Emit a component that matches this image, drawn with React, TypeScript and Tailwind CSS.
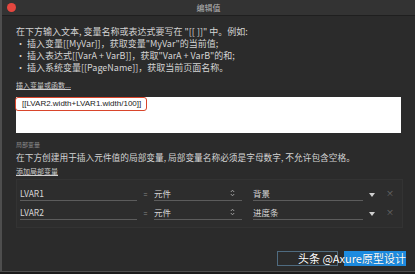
import React from 'react';

const font = { fontFamily: '"Noto Sans CJK SC", "Noto Sans", sans-serif' };

function Row({ name, target }: { name: string; target: string }) {
  return (
    <div className="flex items-end h-[19px]">
      <div className="ml-[3px] w-[117px] border-b border-[#5c5c5c] text-[8.5px] leading-[12px] text-[#d6d6d6] pb-[1px]">{name}</div>
      <div className="w-[17px] text-center text-[7px] leading-[12px] text-[#8a8a8a] pb-[1px]">=</div>
      <div className="w-[88px] border-b border-[#5c5c5c] flex items-center justify-between text-[8.5px] leading-[12px] text-[#d6d6d6] pb-[1px]">
        <span>元件</span>
        <svg width="5" height="8" viewBox="0 0 5 8" className="mr-[7px]">
          <path d="M0.8 3 L2.5 1.2 L4.2 3 M0.8 5 L2.5 6.8 L4.2 5" fill="none" stroke="#a8a8a8" strokeWidth="0.9" />
        </svg>
      </div>
      <div className="ml-[11px] w-[110px] border-b border-[#5c5c5c] text-[8.5px] leading-[12px] text-[#d6d6d6] pb-[1px]">{target}</div>
      <div className="w-[17px] flex justify-center pb-[4px]">
        <svg width="6" height="4" viewBox="0 0 6 4"><path d="M0 0 L6 0 L3 4 Z" fill="#cfcfcf" /></svg>
      </div>
      <div className="ml-[6px] text-[8px] leading-[12px] text-[#707070] pb-[2px]">×</div>
    </div>
  );
}

export default function App() {
  return (
    <div className="w-[415px] h-[274px] bg-[#1b1b1b] overflow-hidden relative" style={font}>
      <div className="w-[415px] h-[272px] bg-[#2b2b2b] border-l-2 border-b border-[#4e4e4e] flex flex-col">
        <div className="h-[16px] bg-[#333333] border-b border-[#1f1f1f] flex items-center relative">
          <div className="ml-[5px] w-[9px] h-[9px] rounded-full bg-[#e5473f]" />
          <div className="absolute inset-0 flex items-center justify-center text-[8px] text-[#b5b5b5]">编辑值</div>
        </div>

        <div className="px-[14px] pt-[10px] flex flex-col">
          <div className="text-[9px] leading-[12px] text-[#d4d4d4]">
            <div>在下方输入文本, 变量名称或表达式要写在 "[[ ]]" 中。例如:</div>
            <div>• 插入变量[[MyVar]]，获取变量"MyVar"的当前值;</div>
            <div>• 插入表达式[[VarA + VarB]]，获取"VarA + VarB"的和;</div>
            <div>• 插入系统变量[[PageName]]，获取当前页面名称。</div>
          </div>

          <div className="mt-[6px] text-[7px] leading-[10px] text-[#cfcfcf] underline">插入变量或函数...</div>

          <div className="mt-[7px] h-[36px] bg-white relative">
            <div className="absolute left-[-1px] top-0 w-[132px] h-[14px] border-[1.5px] border-[#d9452b] rounded-[3px]" />
            <div className="pl-[6px] pt-[2px] text-[8px] leading-[10px] text-[#222222]" style={{ fontFamily: '"Liberation Sans", Arial, sans-serif' }}>
              [[LVAR2.width+LVAR1.width/100]]
            </div>
          </div>

          <div className="mt-[8px] text-[6px] leading-[8px] text-[#8c8c8c]">局部变量</div>
          <div className="mt-[3px] text-[8.7px] leading-[12px] text-[#d4d4d4]">在下方创建用于插入元件值的局部变量, 局部变量名称必须是字母数字, 不允许包含空格。</div>
          <div className="mt-[2px] text-[7px] leading-[10px] text-[#cfcfcf] underline">添加局部变量</div>

          <div className="mt-[3px] w-[387px] border border-[#333333] bg-[#2d2d2d] pt-[2px] pb-[7px] flex flex-col">
            <Row name="LVAR1" target="背景" />
            <Row name="LVAR2" target="进度条" />
          </div>

          <div className="mt-[23px] flex justify-end gap-[6px]">
            <div className="w-[61px] h-[15px] border border-[#4f6b80]" />
            <div className="w-[62px] h-[15px] bg-[#1c8be0] mr-[-5px]" />
          </div>
        </div>
      </div>
      <div className="absolute left-[298px] top-[251px] text-[11px] leading-[14px] text-white whitespace-nowrap" style={{ textShadow: '0 0 1px rgba(0,0,0,0.4)' }}>
        头条 @Axure原型设计
      </div>
    </div>
  );
}
